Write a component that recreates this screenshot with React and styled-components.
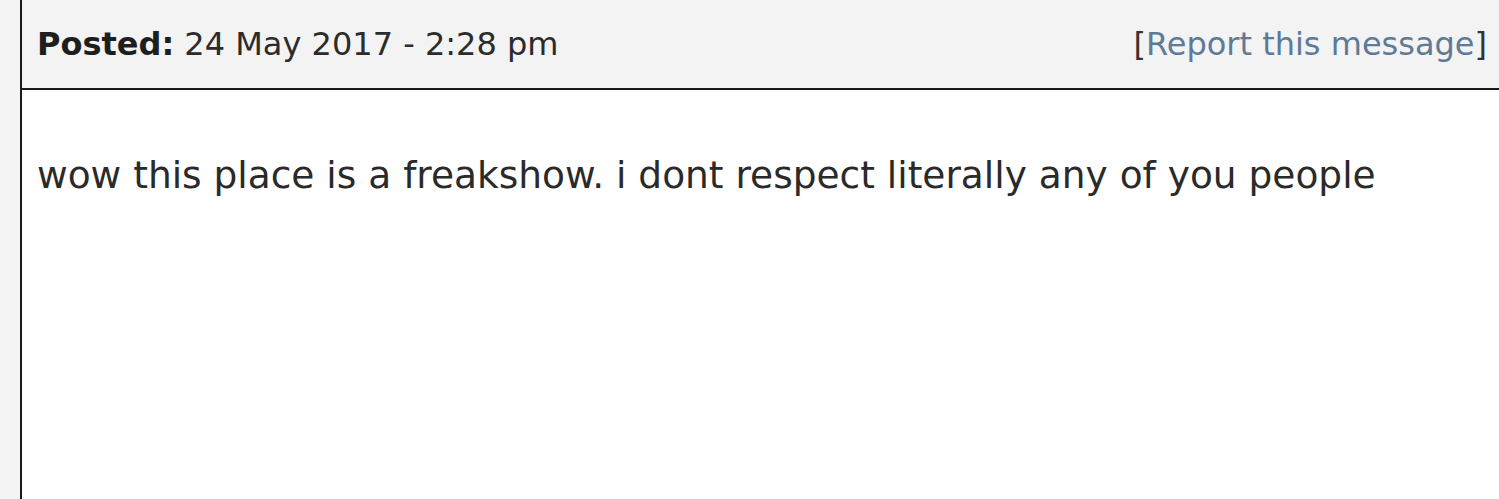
import React from "react";
import styled, { createGlobalStyle } from "styled-components";

const Global = createGlobalStyle`
  html, body {
    margin: 0;
    padding: 0;
    background: #f4f4f4;
  }
  body {
    font-family: "DejaVu Sans", Verdana, sans-serif;
    color: #2b2b2b;
  }
`;

const Page = styled.div`
  height: 499px;
  padding-left: 20px;
  overflow: hidden;
`;

const Post = styled.div`
  height: 100%;
  background: #fff;
  border-left: 2px solid #1a1a1a;
  display: flex;
  flex-direction: column;
`;

const PostHeader = styled.div`
  height: 90px;
  box-sizing: border-box;
  background: #f3f3f3;
  border-bottom: 2px solid #1a1a1a;
  display: flex;
  align-items: center;
  justify-content: space-between;
  padding: 0 12px 0 15px;
  font-size: 32px;
`;

const Label = styled.b`
  font-weight: bold;
  color: #1e1e1e;
`;

const Report = styled.span`
  color: #333;
`;

const ReportLink = styled.a`
  color: #5f7a96;
  text-decoration: none;
`;

const Body = styled.div`
  padding: 63px 15px 0;
  font-size: 37.5px;
  color: #2a2a2a;
`;

const App = () => {
  return (
    <Page>
      <Global />
      <Post>
        <PostHeader>
          <span>
            <Label>Posted:</Label> 24 May 2017 - 2:28 pm
          </span>
          <Report>
            [<ReportLink href="#">Report this message</ReportLink>]
          </Report>
        </PostHeader>
        <Body>
          wow this place is a freakshow. i dont respect literally any of you
          people
        </Body>
      </Post>
    </Page>
  );
};

export default App;
